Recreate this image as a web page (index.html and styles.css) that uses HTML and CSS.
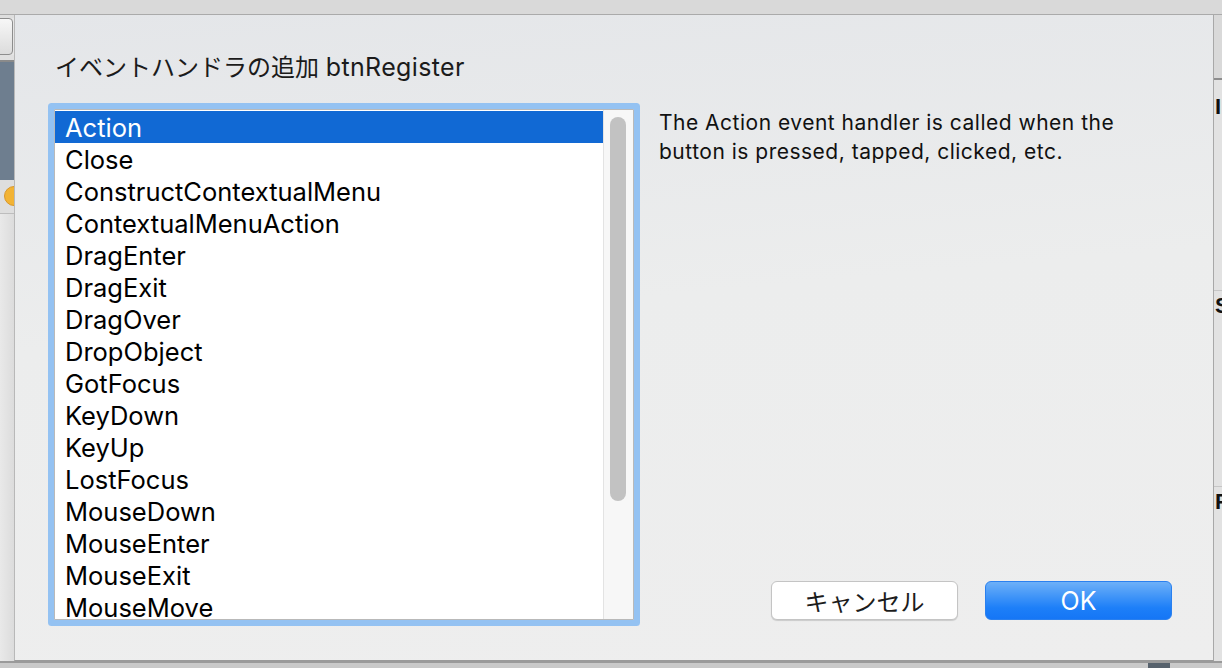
FILE: index.html
```html
<!DOCTYPE html>
<html lang="ja">
<head>
<meta charset="utf-8">
<title>イベントハンドラの追加</title>
<link rel="stylesheet" href="styles.css">
</head>
<body>
<div class="app">
  <div class="titlebar"></div>
  <div class="app-body">
    <div class="side-left">
      <div class="sl-gap"></div>
      <div class="sl-button"></div>
      <div class="sl-bar"></div>
      <div class="sl-slate"></div>
      <div class="sl-tools"><span class="sl-dot"></span></div>
      <div class="sl-rest"></div>
    </div>
    <div class="app-center"></div>
    <div class="side-right">
      <div class="sr-head"></div>
      <div class="sr-sec"><span>I</span></div>
      <div class="sr-sec sr-tall"><span>S</span></div>
      <div class="sr-sec sr-last"><span>F</span></div>
    </div>
  </div>
  <div class="bottombar"><span class="bb-dark"></span></div>
</div>

<div class="sheet">
  <h1 class="sheet-title">イベントハンドラの追加 <span class="title-name">btnRegister</span></h1>
  <div class="sheet-main">
    <div class="listbox">
      <ul class="list">
        <li class="row selected">Action</li>
        <li class="row">Close</li>
        <li class="row">ConstructContextualMenu</li>
        <li class="row">ContextualMenuAction</li>
        <li class="row">DragEnter</li>
        <li class="row">DragExit</li>
        <li class="row">DragOver</li>
        <li class="row">DropObject</li>
        <li class="row">GotFocus</li>
        <li class="row">KeyDown</li>
        <li class="row">KeyUp</li>
        <li class="row">LostFocus</li>
        <li class="row">MouseDown</li>
        <li class="row">MouseEnter</li>
        <li class="row">MouseExit</li>
        <li class="row">MouseMove</li>
      </ul>
      <div class="scrollbar"><div class="thumb"></div></div>
    </div>
    <div class="side">
      <p class="desc">The Action event handler is called when the button is pressed, tapped, clicked, etc.</p>
      <div class="buttons">
        <button class="btn btn-cancel">キャンセル</button>
        <button class="btn btn-ok">OK</button>
      </div>
    </div>
  </div>
</div>
</body>
</html>
```
FILE: styles.css
```css
* { box-sizing: border-box; }
html, body { margin: 0; padding: 0; }
body {
  width: 1222px;
  height: 668px;
  overflow: hidden;
  position: relative;
  font-family: "Inter", "Noto Sans CJK JP", sans-serif;
  background: #e6e6e6;
}

/* background application window */
.app { display: flex; flex-direction: column; height: 668px; }
.titlebar { height: 15px; background: #d9d9d9; border-bottom: 1px solid #aaaaaa; }
.app-body { flex: 1; display: flex; }
.side-left { width: 14px; display: flex; flex-direction: column; }
.sl-gap { height: 3px; background: #dedede; }
.sl-button {
  height: 37px; margin-left: -6px; width: 19px;
  background: linear-gradient(#f7f7f7, #dcdcdc);
  border: 1px solid #8d8d8d; border-radius: 4px;
}
.sl-bar { height: 7px; background: #e0e0e0; border-bottom: 2px solid #8a8a8a; }
.sl-slate { height: 118px; background: #6e7e8f; }
.sl-tools { height: 34px; background: #dedede; border-bottom: 1px solid #bdbdbd; position: relative; overflow: hidden; }
.sl-dot {
  position: absolute; left: 4px; top: 6px; width: 20px; height: 20px;
  border-radius: 50%; background: #f2b334; border: 1px solid #d9972a;
}
.sl-rest { flex: 1; background: linear-gradient(90deg, #e9e9e9, #dcdcdc); }
.app-center { flex: 1; }
.side-right { width: 8px; display: flex; flex-direction: column; background: #e2e2e2; overflow: hidden; }
.sr-head { height: 65px; background: #d9d9d9; border-bottom: 2px solid #8d8d8d; }
.sr-sec {
  height: 211px; border-bottom: 1px solid #c6c6c6;
  font: 700 22px "Liberation Sans", sans-serif; color: #111;
  padding-top: 16px; padding-left: 1px; line-height: 22px;
}
.sr-tall { height: 196px; padding-top: 4px; }
.sr-last { flex: 1; border-bottom: none; padding-top: 4px; }
.bottombar { height: 7px; background: #c9c9c9; border-top: 2px solid #9a9a9a; position: relative; }
.bb-dark { position: absolute; left: 1148px; top: 0; width: 22px; height: 7px; background: #57626d; }

/* sheet dialog (overlays the window) */
.sheet {
  position: absolute;
  left: 14px; top: 15px;
  width: 1200px; height: 646px;
  background: linear-gradient(175deg, #e4e6e9 0%, #eceded 45%, #eeeeee 100%);
  border-left: 1px solid #b8b8b8;
  border-right: 1px solid #a8a8a8;
  border-bottom: 1px solid #9a9a9a;
  padding: 37px 41px 0 33px;
  display: flex; flex-direction: column;
}
.sheet-title {
  margin: 0 0 26px 7px;
  font: 400 24px/30px "Inter", "Noto Sans CJK JP", sans-serif;
  color: #1b1b1b;
  white-space: nowrap;
}
.title-name { font-size: 25px; letter-spacing: 0.35px; }
.sheet-main { display: flex; flex: 1; padding-bottom: 40px; }

.listbox {
  margin-left: 6px;
  width: 580px; height: 511px;
  border: 1px solid #b9b9b9;
  box-shadow: 0 0 0 6px #94c2f2;
  border-radius: 1px;
  background: #fff;
  display: flex;
}
.list {
  list-style: none; margin: 0; padding: 1px 0 0 0;
  flex: 1;
}
.row {
  height: 32px; line-height: 28px;
  padding: 3px 0 0 10px;
  font-size: 25.5px; color: #000;
  white-space: nowrap;
}
.row:last-child { height: 28px; line-height: 24px; padding-top: 5px; }
.row.selected { background: #1169d4; color: #fff; }
.scrollbar {
  width: 30px; background: #f7f7f7; border-left: 1px solid #e3e3e3;
  padding: 7px 0 0 6px;
}
.thumb { width: 16px; height: 384px; background: #c2c2c2; border-radius: 8px; }

.side { flex: 1; display: flex; flex-direction: column; padding-left: 25px; }
.desc {
  margin: -1px 0 0 0;
  font-size: 21px; line-height: 29px; color: #111;
  letter-spacing: 0.5px;
  width: 490px;
}
.buttons { margin-top: auto; display: flex; justify-content: flex-end; gap: 27px; }
.btn {
  width: 187px; height: 39px; border-radius: 6px;
  font-family: "Inter", "Noto Sans CJK JP", sans-serif;
  padding: 0; cursor: default;
}
.btn-cancel {
  background: #fff; border: 1px solid #c4c4c4;
  box-shadow: 0 1px 1px rgba(0,0,0,0.15);
  font-size: 24px; color: #1c1c1c;
}
.btn-ok {
  background: linear-gradient(#6db0f8, #1d7ff8 70%, #1576f6);
  border: 1px solid #2a80ef;
  color: #fff; font-size: 25px;
}
```
